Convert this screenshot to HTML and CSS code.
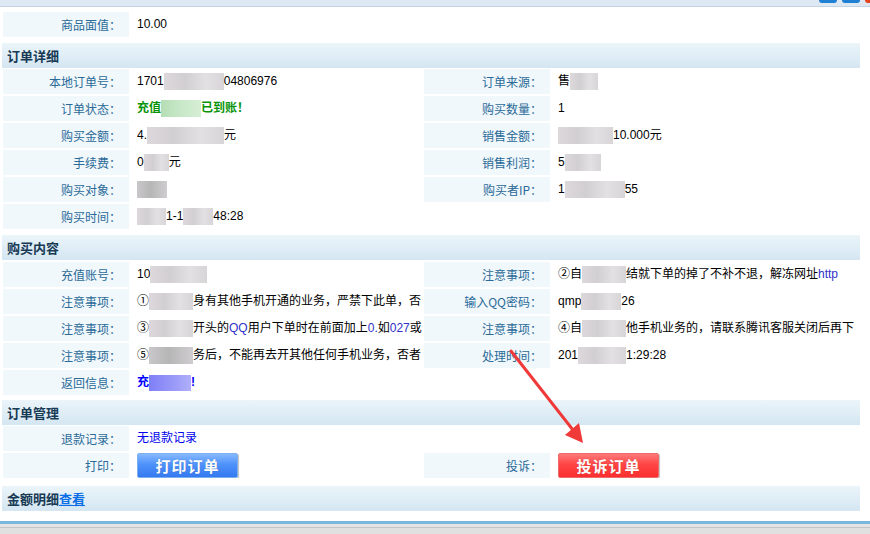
FILE: index.html
```html
<!DOCTYPE html>
<html lang="zh-CN">
<head>
<meta charset="utf-8">
<title>订单详细</title>
<link rel="stylesheet" href="styles.css">
</head>
<body>
<div class="topbar">
  <span class="tb tb-blue"></span><span class="tb tb-blue"></span><span class="tb tb-red"></span>
</div>

<div class="page">
  <div class="grid first">
    <div class="lbl">商品面值：</div><div class="val">10.00</div>
  </div>

  <section class="sec s1">
    <div class="head">订单详细</div>
    <div class="grid g1">
      <div class="lbl">本地订单号：</div><div class="val">1701<span class="mask" style="width:60px"></span>04806976</div>
      <div class="lbl">订单来源：</div><div class="val">售<span class="mask" style="width:28px"></span></div>

      <div class="lbl">订单状态：</div><div class="val ok">充值<span class="mask green" style="width:40px"></span>已到账！</div>
      <div class="lbl">购买数量：</div><div class="val">1</div>

      <div class="lbl">购买金额：</div><div class="val">4.<span class="mask" style="width:77px"></span>元</div>
      <div class="lbl">销售金额：</div><div class="val"><span class="mask" style="width:55px"></span>10.000元</div>

      <div class="lbl">手续费：</div><div class="val">0<span class="mask" style="width:25px"></span>元</div>
      <div class="lbl">销售利润：</div><div class="val">5<span class="mask" style="width:36px"></span></div>

      <div class="lbl">购买对象：</div><div class="val"><span class="mask dark" style="width:30px"></span></div>
      <div class="lbl">购买者IP：</div><div class="val">1<span class="mask" style="width:60px"></span>55</div>

      <div class="lbl">购买时间：</div><div class="val"><span class="mask" style="width:29px"></span>1-1<span class="mask" style="width:30px"></span>48:28</div>
    </div>
  </section>

  <section class="sec s2">
    <div class="head">购买内容</div>
    <div class="grid g2">
      <div class="lbl">充值账号：</div><div class="val">10<span class="mask" style="width:57px"></span></div>
      <div class="lbl">注意事项：</div><div class="val">②自<span class="mask" style="width:44px"></span>结就下单的掉了不补不退，解冻网址<span class="lat">http</span></div>

      <div class="lbl">注意事项：</div><div class="val">①<span class="mask" style="width:44px"></span>身有其他手机开通的业务，严禁下此单，否</div>
      <div class="lbl">输入QQ密码：</div><div class="val">qmp<span class="mask" style="width:40px"></span>26</div>

      <div class="lbl">注意事项：</div><div class="val">③<span class="mask" style="width:44px"></span>开头的<span class="lat">QQ</span>用户下单时在前面加上<span class="lat">0.</span>如<span class="lat">027</span>或</div>
      <div class="lbl">注意事项：</div><div class="val">④自<span class="mask" style="width:44px"></span>他手机业务的，请联系腾讯客服关闭后再下</div>

      <div class="lbl">注意事项：</div><div class="val">⑤<span class="mask dark" style="width:44px"></span>务后，不能再去开其他任何手机业务，否者</div>
      <div class="lbl">处理时间：</div><div class="val">201<span class="mask" style="width:48px"></span>1:29:28</div>

      <div class="lbl">返回信息：</div><div class="val back">充<span class="mask blue" style="width:42px"></span>!</div>
    </div>
  </section>

  <section class="sec s3">
    <div class="head">订单管理</div>
    <div class="grid g3">
      <div class="lbl">退款记录：</div><div class="val refund">无退款记录</div>
      <div class="empty"></div><div class="empty"></div>

      <div class="lbl">打印：</div><div class="val"><button class="btn btn-blue" type="button">打印订单</button></div>
      <div class="lbl">投诉：</div><div class="val"><button class="btn btn-red" type="button">投诉订单</button></div>
    </div>
  </section>

  <section class="sec s4">
    <div class="head">金额明细<a class="view" href="#">查看</a></div>
  </section>
</div>

<div class="footer"></div>

<svg class="arrow" width="870" height="534" viewBox="0 0 870 534" aria-hidden="true">
  <line x1="511" y1="351" x2="573" y2="430" stroke="#f03a3a" stroke-width="3" stroke-linecap="round"/>
  <polygon points="583,443 565,435 579,423" fill="#f03a3a"/>
</svg>
</body>
</html>
```

FILE: styles.css
```css
* { box-sizing: border-box; }

html, body {
  margin: 0;
  padding: 0;
  background: #ffffff;
}

body {
  width: 870px;
  height: 534px;
  overflow: hidden;
  position: relative;
  font-family: "Liberation Sans", "Noto Sans CJK SC", sans-serif;
  font-size: 12px;
  color: #000;
}

.topbar {
  height: 7px;
  background: #dde8f3;
  border-bottom: 1px solid #c3d3e2;
  display: flex;
  justify-content: flex-end;
  align-items: flex-start;
  gap: 5px;
}

.tb {
  display: block;
  height: 3px;
  border-radius: 0 0 4px 4px;
}
.tb-blue { width: 18px; background: #1f7fd2; }
.tb-red { width: 5px; background: #e8431f; border-radius: 0 0 0 4px; }

.page {
  padding: 0 10px 0 2px;
}

.grid {
  display: grid;
  grid-template-columns: 126px 291px 126px 1fr;
  grid-auto-rows: 25px;
  column-gap: 2px;
  row-gap: 2px;
  margin-left: 1px;
}

.grid.first { margin-top: 5px; }

.lbl {
  background: #f1f8fc;
  color: #2a6a98;
  text-align: right;
  padding-right: 8px;
  line-height: 25px;
  white-space: nowrap;
  font-family: "Noto Sans CJK SC", sans-serif;
}

.val {
  padding-left: 6px;
  line-height: 25px;
  white-space: nowrap;
  overflow: hidden;
  display: flex;
  align-items: center;
}

.empty { background: transparent; }

.mask {
  display: inline-block;
  height: 17px;
  background: linear-gradient(90deg, #dcd8dc 0%, #d2cfd3 35%, #e2e0e3 70%, #d8d5d9 100%);
  flex: none;
}
.mask.dark { background: linear-gradient(90deg, #c9c7c9 0%, #b7b6b7 45%, #cfcdcf 100%); }
.mask.green { background: linear-gradient(90deg, #b4deb4 0%, #c8e8c8 50%, #d6eed6 100%); }
.mask.blue { background: linear-gradient(90deg, #7f7ff8 0%, #9a9af8 60%, #b0b0fa 100%); height: 16px; }

.ok { color: #079307; font-weight: bold; }
.back { color: #0000ff; font-weight: bold; }
.refund { color: #0000ee; }
.lat { color: #3030c8; }

.sec { display: flex; flex-direction: column; }
.s1 { margin-top: 6px; gap: 1px; }
.s2 { margin-top: 6px; gap: 2px; }
.s3 { margin-top: 5px; gap: 1px; }
.s4 { margin-top: 8px; }

.head {
  height: 25px;
  line-height: 25px;
  padding-left: 5px;
  background: linear-gradient(180deg, #ebf5fa 0%, #d4e6f2 100%);
  color: #173a55;
  font-weight: bold;
  font-size: 13px;
  font-family: "Noto Sans CJK SC", sans-serif;
}

.view {
  color: #0a6fe6;
  text-decoration: underline;
}

.btn {
  width: 101px;
  height: 25px;
  padding: 0;
  margin: 0;
  border-radius: 2px;
  color: #fff;
  font-family: "Noto Sans CJK SC", sans-serif;
  font-weight: bold;
  font-size: 15px;
  letter-spacing: 1px;
  line-height: 23px;
  cursor: pointer;
  box-shadow: 1px 1px 1px rgba(0, 0, 0, 0.25);
  text-shadow: 0 0 1px rgba(0, 0, 0, 0.25);
}

.btn-blue {
  border: 1px solid #7ab0f0;
  background: linear-gradient(180deg, #86b9ff 0%, #4e92fb 45%, #3579f0 100%);
}

.btn-red {
  border: 1px solid #ef6a6a;
  background: linear-gradient(180deg, #ff7a7a 0%, #ff4545 45%, #fb2f2f 100%);
}

.footer {
  margin-top: 10px;
  height: 13px;
  border-top: 3px solid #78b6dc;
  background: linear-gradient(180deg, #e4e4e4 0px, #e4e4e4 3px, #c4c4c4 3px, #c4c4c4 4px, #e0e0e0 4px);
}

.arrow {
  position: absolute;
  left: 0;
  top: 0;
  pointer-events: none;
}
```
